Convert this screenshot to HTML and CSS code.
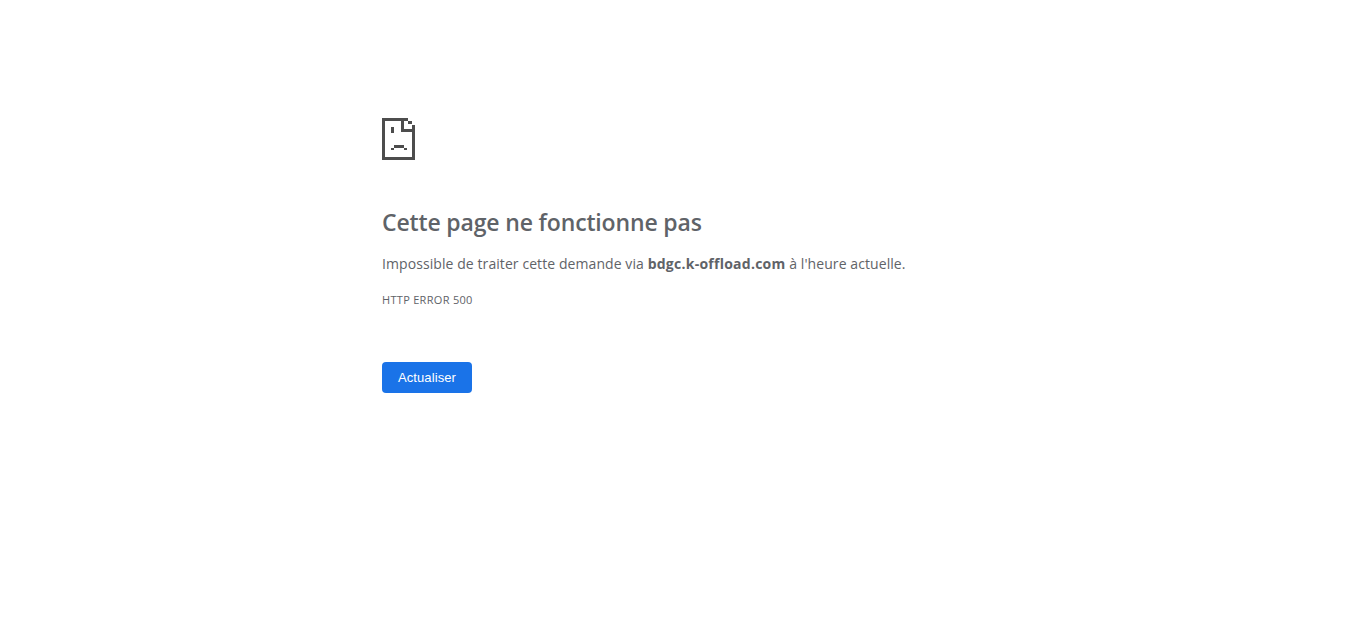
FILE: index.html
```html
<!DOCTYPE html>
<html lang="fr">
<head>
<meta charset="utf-8">
<title>Erreur</title>
<link rel="stylesheet" href="styles.css">
</head>
<body>
<main class="wrap">
  <svg class="icon" width="33" height="42" viewBox="0 0 33 42" shape-rendering="crispEdges" aria-hidden="true">
    <path fill="#4d4d4d" d="M0 0H26V3H3V39H30V7H33V42H0ZM26 3H30V6H26ZM19 3H22V11H30V14H19ZM9 9H12V15H9ZM12 27H22V30H12ZM9 30H12V32H9ZM22 30H25V32H22Z"/>
  </svg>
  <h1 class="title">Cette page ne fonctionne pas</h1>
  <p class="desc">Impossible de traiter cette demande via <strong>bdgc.k-offload.com</strong> à l'heure actuelle.</p>
  <div class="code">HTTP ERROR 500</div>
  <button class="reload">Actualiser</button>
</main>
</body>
</html>
```
FILE: styles.css
```css
html, body { margin: 0; background: #fff; }
body { height: 626px; overflow: hidden; font-family: "Open Sans", "Noto Sans", sans-serif; color: #5f6368; }
.wrap { width: 600px; margin-left: 382px; padding-top: 118px; display: flex; flex-direction: column; align-items: flex-start; }
.icon { display: block; }
.title { margin: 46px 0 0; font-size: 23px; line-height: 32px; font-weight: 600; letter-spacing: -0.15px; color: #5f6368; }
.desc { margin: 16px 0 0; font-size: 14px; line-height: 20px; letter-spacing: 0.08px; }
.desc strong { font-weight: 700; letter-spacing: 0.25px; }
.code { margin-top: 18px; font-size: 11px; line-height: 16px; letter-spacing: 0.3px; }
.reload { margin-top: 54px; width: 90px; height: 31px; padding: 0; border: 0; border-radius: 4px; background: #1a73e8; color: #fff; font-family: "Liberation Sans", Arial, sans-serif; font-size: 13px; letter-spacing: 0.1px; }
```
